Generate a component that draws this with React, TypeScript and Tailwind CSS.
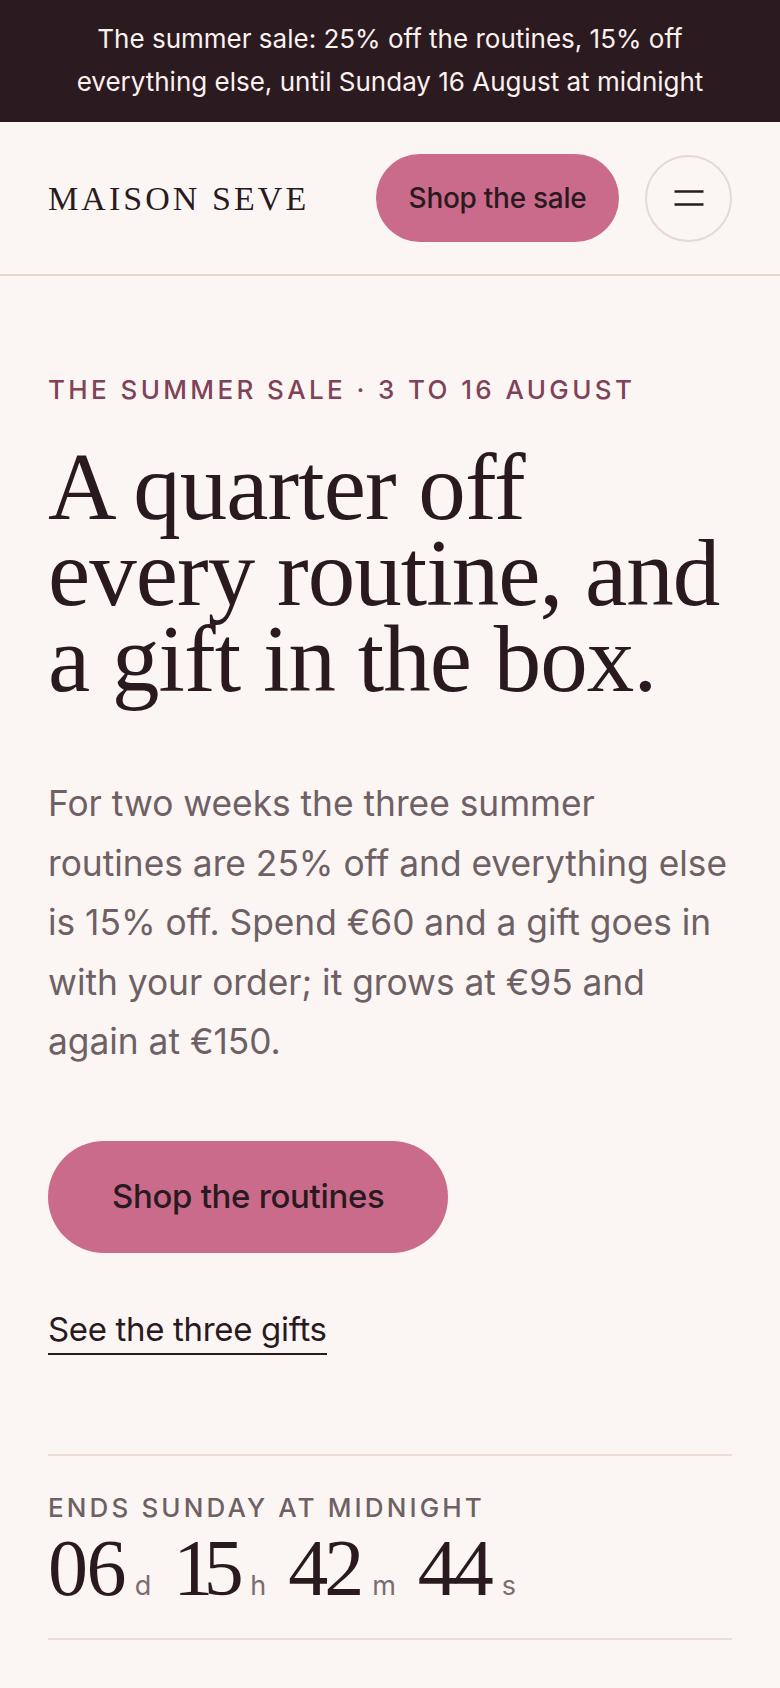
import React from "react";

const sans = { fontFamily: "Inter, 'Noto Sans', sans-serif" };
const serif = { fontFamily: "'Liberation Serif', 'DejaVu Serif', serif" };

const parts: { n: string; u: string; track: string }[] = [
  { n: "06", u: "d", track: "tracking-[-0.02em] mr-[1px]" },
  { n: "15", u: "h", track: "tracking-[-0.12em] mr-[7px]" },
  { n: "42", u: "m", track: "tracking-[-0.05em] mr-[3px]" },
  { n: "44", u: "s", track: "tracking-[-0.05em] mr-[3px]" },
];

export default function App() {
  return (
    <div className="min-h-[1688px] bg-[#fbf6f3]" style={sans}>
      <div className="bg-[#2b1a20] px-10 pt-[17px] pb-[19px] text-center text-[26px] leading-[43px] text-[#fbf1ee]">
        The summer sale: 25% off the routines, 15% off
        <br />
        everything else, until Sunday 16 August at midnight
      </div>

      <header className="flex h-[154px] items-center justify-between border-b-2 border-[#e8d6ce] px-12">
        <div className="text-[34px] tracking-[0.09em] text-[#2a1a1f]" style={serif}>
          MAISON SEVE
        </div>
        <div className="flex items-center gap-[26px]">
          <button className="flex h-[88px] w-[243px] items-center justify-center rounded-full bg-[#cb6b8b] text-[28px] font-medium tracking-[-0.01em] text-[#2a1a1f]">
            Shop the sale
          </button>
          <button className="flex h-[87px] w-[87px] items-center justify-center rounded-full border-2 border-[#e8d8d3]">
            <svg width="30" height="16" viewBox="0 0 30 16" fill="none">
              <line x1="0.5" y1="1.5" x2="29.5" y2="1.5" stroke="#2a1a1f" strokeWidth="2.5" />
              <line x1="0.5" y1="14.5" x2="29.5" y2="14.5" stroke="#2a1a1f" strokeWidth="2.5" />
            </svg>
          </button>
        </div>
      </header>

      <main className="px-12">
        <div className="pt-[98px] text-[26px] font-medium leading-[32px] tracking-[0.13em] text-[#7f4258]">
          THE SUMMER SALE · 3 TO 16 AUGUST
        </div>

        <h1 className="mt-[38px] text-[95px] leading-[86px] tracking-[-0.01em] text-[#2a1a1f]" style={serif}>
          A quarter off
          <br />
          every routine, and
          <br />
          a gift in the box.
        </h1>

        <p className="mt-[72px] whitespace-nowrap text-[35.3px] leading-[59.5px] text-[#6e6064]">
          For two weeks the three summer
          <br />
          routines are 25% off and everything else
          <br />
          is 15% off. Spend €60 and a gift goes in
          <br />
          with your order; it grows at €95 and
          <br />
          again at €150.
        </p>

        <button className="mt-[69px] flex h-[112px] items-center rounded-full bg-[#cb6b8b] px-16 text-[33px] font-medium tracking-[-0.01em] text-[#2a1a1f]">
          Shop the routines
        </button>

        <div className="mt-[56px]">
          <a className="inline-block border-b-2 border-[#2a1a1f] pb-[4px] text-[33px] leading-[40px] tracking-[-0.01em] text-[#2a1a1f]">
            See the three gifts
          </a>
        </div>

        <section className="mt-[99px] border-y-2 border-[#ebdcd5] pt-[36px] pb-[30px]">
          <div className="text-[26px] font-medium leading-[32px] tracking-[0.12em] text-[#6e6064]">
            ENDS SUNDAY AT MIDNIGHT
          </div>
          <div className="mt-[4px] flex h-[80px] items-baseline gap-[22px]">
            {parts.map((p) => (
              <div key={p.u} className="flex items-baseline gap-[9px]">
                <span className={`text-[80px] leading-[80px] text-[#2a1a1f] ${p.track}`} style={serif}>
                  {p.n}
                </span>
                <span className="text-[27px] leading-[32px] text-[#7a6c70]">{p.u}</span>
              </div>
            ))}
          </div>
        </section>
      </main>
    </div>
  );
}
